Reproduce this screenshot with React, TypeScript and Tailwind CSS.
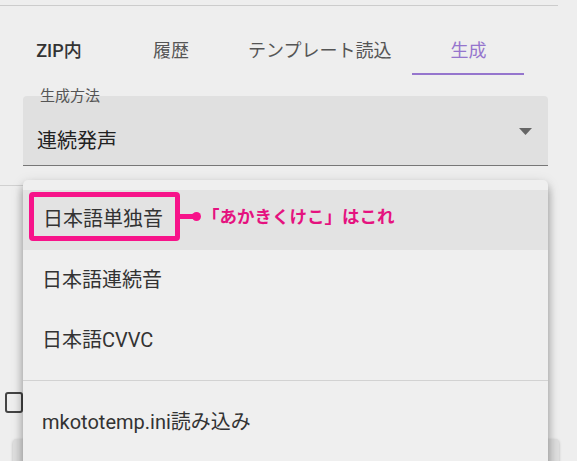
import React from "react";

const font = { fontFamily: "Roboto, 'Noto Sans CJK JP', sans-serif" };

function Item({ children }: { children: React.ReactNode }) {
  return <div className="h-[60px] flex items-center pl-[19px] text-[20px] text-[#333333]">{children}</div>;
}

export default function App() {
  const tabs = ["ZIP内", "履歴", "テンプレート読込", "生成"];
  return (
    <div className="relative w-[577px] h-[461px] overflow-hidden bg-[#eeeeee]" style={font}>
      <div className="pt-[5px]">
        <div className="w-[558px] h-px bg-[#cccccc]" />
      </div>
      <div className="flex pl-[3px] mt-[21px]">
        {tabs.map((t, i) => (
          <div
            key={t}
            className={
              "min-w-[112px] h-[48px] px-[21px] flex items-center justify-center text-[18px] border-b-2 " +
              (i === 3
                ? "text-[#9575cd] border-[#9575cd]"
                : i === 0
                ? "text-[#333333] font-medium border-transparent"
                : "text-[#555555] border-transparent")
            }
          >
            {t}
          </div>
        ))}
      </div>
      <div className="ml-[23px] mt-[21px] w-[525px] h-[70px] relative bg-[#e0e0e0] rounded-t-[4px] border-b border-[#777777] flex items-end justify-between pl-[14px] pr-[16px] pb-[10px]">
        <span className="absolute left-[17px] top-[-10px] text-[15px] leading-[20px] text-[#555555]">生成方法</span>
        <span className="text-[20px] leading-[28px] text-[#222222]">連続発声</span>
        <svg className="mb-[20px]" width="13" height="7" viewBox="0 0 13 7">
          <polygon points="0,0 13,0 6.5,7" fill="#666666" />
        </svg>
      </div>
      <div className="mt-[19px] w-[40px] h-px bg-[#d0d0d0]" />
      <div className="ml-[5px] mt-[206px] w-[18px] h-[21px] rounded-[3px] border-2 border-[#444444]" />
      <div className="ml-[13px] mt-[26px] w-[546px] h-[30px] bg-[#dedede] rounded-[4px] shadow-[0_1px_3px_rgba(0,0,0,0.25)]" />

      <div className="absolute left-[23px] top-[180px] w-[525px] h-[300px] bg-[#efefef] rounded-[5px] shadow-[0_5px_8px_rgba(0,0,0,0.2),0_3px_14px_rgba(0,0,0,0.12),0_8px_10px_rgba(0,0,0,0.14)] pt-[10px]">
        <div className="h-[60px] bg-[#e3e3e3] flex items-start pl-[6px] pt-[2px]">
          <div className="flex items-center">
            <div className="w-[151px] h-[49px] border-[5px] border-[#f7138a] rounded-[4px] flex items-center pl-[9px] pt-[4px] text-[20px] text-[#333333]">
              日本語単独音
            </div>
            <div className="w-[17px] h-[5px] bg-[#f7138a]" />
            <div className="-ml-[5px] w-[9px] h-[9px] rounded-full bg-[#f7138a]" />
            <span className="ml-[1px] text-[17.5px] leading-[24px] font-bold text-[#e5127f]">「あかきくけこ」はこれ</span>
          </div>
        </div>
        <Item>日本語連続音</Item>
        <Item>日本語CVVC</Item>
        <div className="mt-[10px] h-px bg-[#d2d2d2]" />
        <div className="h-[82px] flex items-center pl-[19px] text-[20px] text-[#333333]">mkototemp.ini読み込み</div>
      </div>
    </div>
  );
}
